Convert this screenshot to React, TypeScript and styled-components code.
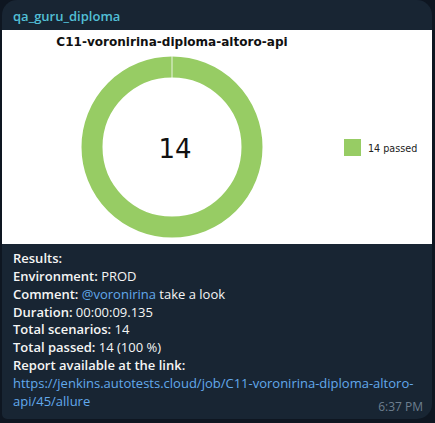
import React from 'react';
import styled, { createGlobalStyle } from 'styled-components';

const GlobalStyle = createGlobalStyle`
  html, body {
    margin: 0;
    padding: 0;
    background: #0e1621;
  }
  body {
    font-family: 'Open Sans', 'Noto Sans', sans-serif;
  }
`;

const Page = styled.div`
  width: 435px;
  height: 423px;
  overflow: hidden;
  background: #0e1621;
`;

const Bubble = styled.div`
  position: relative;
  margin-left: 2px;
  width: 430px;
  height: 419px;
  box-sizing: border-box;
  background: #182533;
  border-radius: 15px 15px 15px 5px;
  padding-top: 7px;
  overflow: hidden;
`;

const Sender = styled.div`
  padding: 0 11px;
  font-size: 13px;
  line-height: 18px;
  font-weight: 600;
  color: #52bfd6;
  margin-bottom: 5px;
`;

const ChartPanel = styled.div`
  display: flex;
  height: 214px;
  box-sizing: border-box;
  background: #ffffff;
  padding-top: 5px;
`;

const ChartColumn = styled.div`
  width: 340px;
  display: flex;
  flex-direction: column;
  align-items: center;
`;

const ChartTitle = styled.div`
  font-family: 'DejaVu Sans', Verdana, sans-serif;
  font-weight: 700;
  font-size: 12.05px;
  line-height: 14px;
  color: #111;
`;

const Donut = styled.svg`
  display: block;
  margin-top: 5.5px;
`;

const Legend = styled.div`
  display: flex;
  align-items: center;
  gap: 7px;
  margin-top: 104px;
  margin-left: 2px;
  height: 17px;
`;

const Swatch = styled.div<{ $color: string }>`
  width: 17px;
  height: 17px;
  background: ${(p) => p.$color};
`;

const LegendText = styled.span`
  font-family: 'DejaVu Sans', Verdana, sans-serif;
  font-size: 9.6px;
  line-height: 17px;
  padding-top: 2px;
  color: #222;
`;

const Body = styled.div`
  padding: 6px 10px 0 11px;
  font-size: 13px;
  line-height: 17.85px;
  color: #f5f5f5;
`;

const Line = styled.div``;

const Label = styled.span`
  font-weight: 600;
`;

const Link = styled.span`
  color: #62a9ec;
`;

const Time = styled.span`
  position: absolute;
  right: 9px;
  bottom: 5px;
  font-size: 12px;
  line-height: 14px;
  color: #6d7f8f;
`;

const GREEN = '#97cc64';

function DonutChart({ value }: { value: number }) {
  const c = 92;
  const r = 80;
  return (
    <Donut width={184} height={184} viewBox="0 0 184 184">
      <circle cx={c} cy={c} r={r} fill="none" stroke={GREEN} strokeWidth={21} />
      <line x1={c} y1={c - r - 11} x2={c} y2={c - r + 11} stroke="#ffffff" strokeWidth={0.8} />
      <text
        x={c + 3}
        y={102.5}
        textAnchor="middle"
        fontFamily="'DejaVu Sans', Verdana, sans-serif"
        fontSize={26}
        fill="#111"
      >
        {value}
      </text>
    </Donut>
  );
}

export default function App() {
  return (
    <Page>
      <GlobalStyle />
      <Bubble>
        <Sender>qa_guru_diploma</Sender>
        <ChartPanel>
          <ChartColumn>
            <ChartTitle>C11-voronirina-diploma-altoro-api</ChartTitle>
            <DonutChart value={14} />
          </ChartColumn>
          <Legend>
            <Swatch $color={GREEN} />
            <LegendText>14 passed</LegendText>
          </Legend>
        </ChartPanel>
        <Body>
          <Line><Label>Results:</Label></Line>
          <Line><Label>Environment:</Label> PROD</Line>
          <Line><Label>Comment:</Label> <Link>@voronirina</Link> take a look</Line>
          <Line><Label>Duration:</Label> 00:00:09.135</Line>
          <Line><Label>Total scenarios:</Label> 14</Line>
          <Line><Label>Total passed:</Label> 14 (100 %)</Line>
          <Line><Label>Report available at the link:</Label></Line>
          <Line>
            <Link>https://jenkins.autotests.cloud/job/C11-voronirina-diploma-altoro-api/45/allure</Link>
          </Line>
        </Body>
        <Time>6:37 PM</Time>
      </Bubble>
    </Page>
  );
}
